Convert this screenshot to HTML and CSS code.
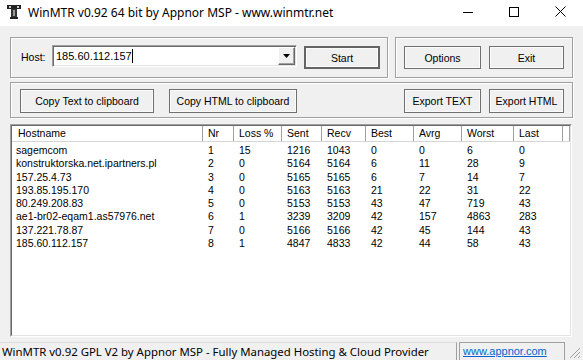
FILE: index.html
```html
<!DOCTYPE html>
<html>
  <head>
    <title>WinMTR</title>
    <link rel="stylesheet" href="styles.css">
  </head>
  <body>
    <div class="window">
      <div class="titlebar">
        <svg class="app-icon" viewBox="0 0 14 14">
          <rect x="0" y="0" width="14" height="4" fill="#222"/>
          <rect x="2" y="1" width="2" height="2" fill="#ccc"/>
          <rect x="10" y="1" width="2" height="2" fill="#ccc"/>
          <rect x="4" y="4" width="6" height="8" fill="#333"/>
          <rect x="6" y="5" width="2" height="6" fill="#999"/>
          <rect x="3" y="12" width="8" height="2" fill="#222"/>
        </svg>
        <span class="title">WinMTR v0.92 64 bit by Appnor MSP - www.winmtr.net</span>
        <div class="controls">
          <span class="ctl">
            <svg width="10" height="10" viewBox="0 0 10 10"><line x1="0" y1="5.5" x2="10" y2="5.5" stroke="#000"/></svg>
          </span>
          <span class="ctl">
            <svg width="10" height="10" viewBox="0 0 10 10"><rect x="0.5" y="0.5" width="9" height="9" fill="none" stroke="#000"/></svg>
          </span>
          <span class="ctl">
            <svg width="11" height="11" viewBox="0 0 11 11"><path d="M0.5 0.5 L10.5 10.5 M10.5 0.5 L0.5 10.5" stroke="#000" fill="none"/></svg>
          </span>
        </div>
      </div>

      <div class="client">
        <div class="row1">
          <div class="group host-group">
            <span class="host-label">Host:</span>
            <div class="combo">
              <span class="combo-text">185.60.112.157</span><span class="caret"></span>
              <span class="drop">
                <svg width="7" height="4" viewBox="0 0 7 4"><path d="M0 0 H7 L3.5 4 Z" fill="#000"/></svg>
              </span>
            </div>
            <button class="btn start">Start</button>
          </div>
          <div class="group opt-group">
            <button class="btn options">Options</button>
            <button class="btn exit">Exit</button>
          </div>
        </div>

        <div class="group row2">
          <button class="btn copy-text">Copy Text to clipboard</button>
          <button class="btn copy-html">Copy HTML to clipboard</button>
          <button class="btn export-text">Export TEXT</button>
          <button class="btn export-html">Export HTML</button>
        </div>

        <div class="list">
          <div class="list-inner">
            <div class="lv-row lv-head">
              <span class="host">Hostname</span><span>Nr</span><span>Loss %</span><span>Sent</span><span>Recv</span><span>Best</span><span>Avrg</span><span>Worst</span><span>Last</span><span></span>
            </div>
            <div class="lv-body">
              <div class="lv-row">
                <span class="host">sagemcom</span><span>1</span><span>15</span><span>1216</span><span>1043</span><span>0</span><span>0</span><span>6</span><span>0</span>
              </div>
              <div class="lv-row">
                <span class="host">konstruktorska.net.ipartners.pl</span><span>2</span><span>0</span><span>5164</span><span>5164</span><span>6</span><span>11</span><span>28</span><span>9</span>
              </div>
              <div class="lv-row">
                <span class="host">157.25.4.73</span><span>3</span><span>0</span><span>5165</span><span>5165</span><span>6</span><span>7</span><span>14</span><span>7</span>
              </div>
              <div class="lv-row">
                <span class="host">193.85.195.170</span><span>4</span><span>0</span><span>5163</span><span>5163</span><span>21</span><span>22</span><span>31</span><span>22</span>
              </div>
              <div class="lv-row">
                <span class="host">80.249.208.83</span><span>5</span><span>0</span><span>5153</span><span>5153</span><span>43</span><span>47</span><span>719</span><span>43</span>
              </div>
              <div class="lv-row">
                <span class="host">ae1-br02-eqam1.as57976.net</span><span>6</span><span>1</span><span>3239</span><span>3209</span><span>42</span><span>157</span><span>4863</span><span>283</span>
              </div>
              <div class="lv-row">
                <span class="host">137.221.78.87</span><span>7</span><span>0</span><span>5166</span><span>5166</span><span>42</span><span>45</span><span>144</span><span>43</span>
              </div>
              <div class="lv-row">
                <span class="host">185.60.112.157</span><span>8</span><span>1</span><span>4847</span><span>4833</span><span>42</span><span>44</span><span>58</span><span>43</span>
              </div>
            </div>
          </div>
        </div>
      </div>

      <div class="statusbar">
        <div class="status-main">WinMTR v0.92 GPL V2 by Appnor MSP - Fully Managed Hosting &amp; Cloud Provider</div>
        <div class="status-link"><a href="#">www.appnor.com</a></div>
        <svg class="grip" width="12" height="12" viewBox="0 0 12 12">
          <path d="M11 1 L1 11 M11 5 L5 11 M11 9 L9 11" stroke="#a0a0a0" fill="none"/>
        </svg>
      </div>
    </div>
  </body>
</html>
```

FILE: styles.css
```css
body{
  margin: 0;
  background-color: #f0f0f0;
}
.window{
  width: 583px;
  height: 360px;
  display: flex;
  flex-direction: column;
  background-color: #f0f0f0;
  font-family: "Liberation Sans", Arial, sans-serif;
  font-size: 10.5px;
  color: #000;
  overflow: hidden;
}

/* title bar */
.titlebar{
  height: 26px;
  flex-shrink: 0;
  display: flex;
  align-items: center;
  background-color: #fff;
}
.app-icon{
  width: 14px;
  height: 14px;
  margin-left: 7px;
  margin-right: 7px;
  margin-top: -2px;
}
.title{
  font-family: "Noto Sans", sans-serif;
  font-size: 12px;
  margin-top: -2px;
}
.controls{
  margin-left: auto;
  display: flex;
  height: 100%;
}
.ctl{
  width: 46px;
  display: flex;
  align-items: center;
  justify-content: center;
  margin-top: -3px;
}

/* dialog area */
.client{
  flex: 1;
  display: flex;
  flex-direction: column;
  padding: 11px 10px 0 10px;
  min-height: 0;
}
.group{
  box-sizing: border-box;
  border: 1px solid #a0a0a0;
  box-shadow: inset 1px 1px 0 #fff, 1px 1px 0 #fff;
}
.row1{
  display: flex;
  gap: 7px;
  height: 41px;
}
.host-group{
  width: 378px;
  display: flex;
  align-items: flex-start;
  padding: 7px 0 0 10px;
}
.host-label{
  width: 31px;
  line-height: 22px;
  margin-top: 1px;
}
.combo{
  box-sizing: border-box;
  width: 245px;
  height: 22px;
  margin-right: 7px;
  display: flex;
  align-items: center;
  background-color: #fff;
  border-top: 1px solid #a0a0a0;
  border-left: 1px solid #a0a0a0;
  border-right: 1px solid #fff;
  border-bottom: 1px solid #fff;
  box-shadow: inset 1px 1px 0 #696969, inset -1px -1px 0 #e3e3e3;
  font-size: 11px;
}
.combo-text{
  padding-left: 3px;
}
.caret{
  width: 1px;
  height: 14px;
  background-color: #000;
}
.drop{
  box-sizing: border-box;
  margin-left: auto;
  margin-right: 1px;
  width: 17px;
  height: 18px;
  display: flex;
  align-items: center;
  justify-content: center;
  background-color: #f0f0f0;
  border: 1px solid #fff;
  border-right-color: #696969;
  border-bottom-color: #696969;
  box-shadow: inset -1px -1px 0 #a0a0a0;
}
.btn{
  box-sizing: border-box;
  height: 23px;
  padding: 0;
  background-color: #f0f0f0;
  border: 1px solid #707070;
  box-shadow: inset 0 0 0 1px #fbfbfb;
  font-family: "Liberation Sans", Arial, sans-serif;
  font-size: 10.5px;
  color: #000;
}
.start{
  width: 76px;
  margin-top: 1px;
  border: 2px solid #646464;
}
.opt-group{
  flex: 1;
  display: flex;
  gap: 8px;
  padding: 8px 0 0 8px;
}
.options{
  width: 77px;
}
.exit{
  width: 75px;
}
.row2{
  margin-top: 4px;
  height: 36px;
  display: flex;
  align-items: flex-start;
  padding: 6px 8px 0 9px;
}
.row2 .btn{
  height: 24px;
}
.copy-text{
  width: 134px;
}
.copy-html{
  width: 128px;
  margin-left: 15px;
}
.export-text{
  width: 77px;
  margin-left: auto;
}
.export-html{
  width: 75px;
  margin-left: 8px;
}

/* list view */
.list{
  flex: 1;
  margin-top: 6px;
  margin-right: 1px;
  margin-bottom: 1px;
  display: flex;
  border-top: 1px solid #a0a0a0;
  border-left: 1px solid #a0a0a0;
  border-right: 1px solid #fff;
  border-bottom: 1px solid #fff;
}
.list-inner{
  flex: 1;
  background-color: #fff;
  border-top: 1px solid #696969;
  border-left: 1px solid #696969;
  border-right: 1px solid #e3e3e3;
  border-bottom: 1px solid #e3e3e3;
}
.lv-row{
  display: grid;
  grid-template-columns: 191px 31px 48px 40px 44px 48px 48px 52px 49px 1fr;
  line-height: 13.3px;
  white-space: nowrap;
}
.lv-row span{
  padding-left: 5px;
  overflow: hidden;
}
.lv-row .host{
  padding-left: 4px;
}
.lv-head{
  line-height: 15px;
  border-bottom: 1px solid #d5d5d5;
}
.lv-head span{
  box-sizing: border-box;
  border-right: 1px solid #a0a0a0;
}
.lv-head .host{
  padding-left: 6px;
}
.lv-body{
  padding-top: 2px;
}

/* status bar */
.statusbar{
  height: 22px;
  flex-shrink: 0;
  display: flex;
  align-items: flex-start;
  padding-top: 4px;
  box-sizing: border-box;
  font-family: "Noto Sans", sans-serif;
  font-size: 11.4px;
}
.status-main{
  box-sizing: border-box;
  width: 457px;
  height: 18px;
  padding-left: 2px;
  line-height: 17px;
  border-top: 1px solid #dcdcdc;
  border-right: 1px solid #a0a0a0;
  white-space: nowrap;
  overflow: hidden;
}
.status-link{
  box-sizing: border-box;
  width: 106px;
  height: 18px;
  margin-left: 2px;
  padding-left: 3px;
  line-height: 17px;
  border: 1px solid #a0a0a0;
  border-bottom: none;
  font-family: "Liberation Sans", Arial, sans-serif;
  font-size: 11px;
}
.status-link a{
  color: #0066cc;
}
.grip{
  margin-left: auto;
  margin-top: 5px;
  margin-right: 2px;
}
```
